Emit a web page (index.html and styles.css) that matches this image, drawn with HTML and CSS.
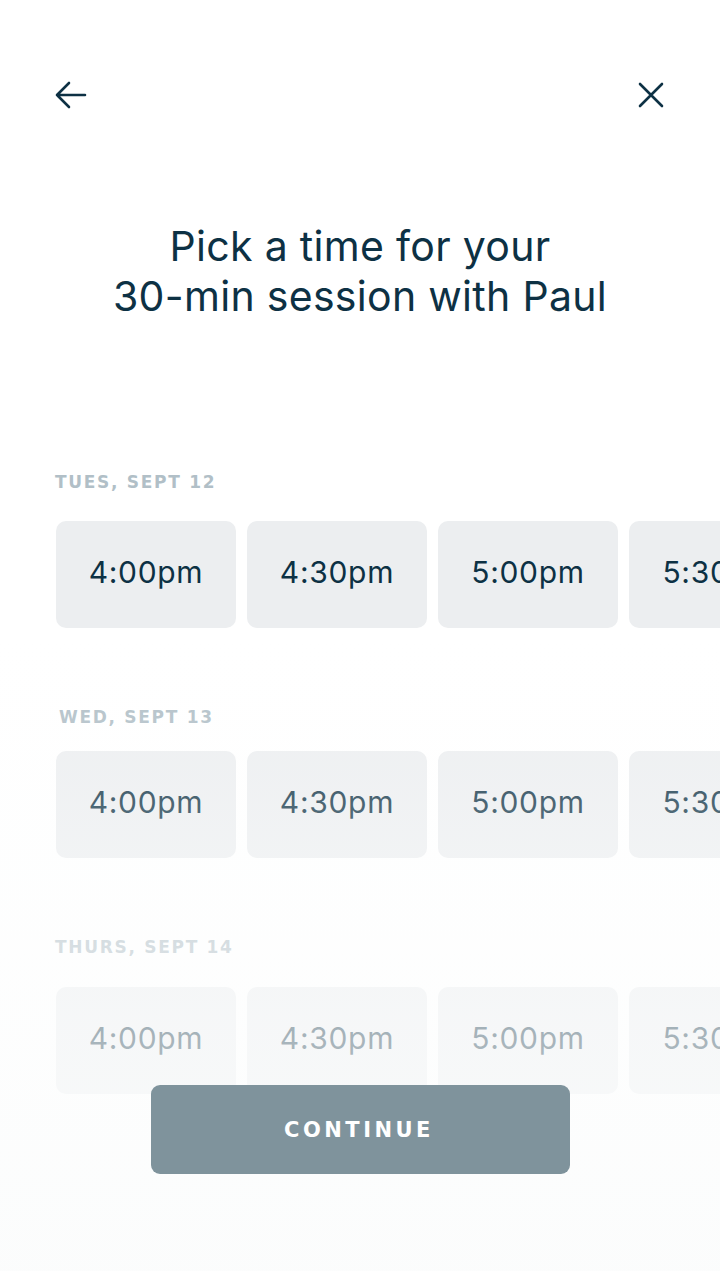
FILE: index.html
```html
<!DOCTYPE html>
<html>
<head>
<meta charset="utf-8">
<link rel="stylesheet" href="styles.css">
</head>
<body>
<div class="screen">
  <header class="topbar">
    <button class="icon-btn" aria-label="Back">
      <svg width="34" height="34" viewBox="0 0 34 34" fill="none" stroke="#0d3144" stroke-width="2.6" stroke-linecap="round" stroke-linejoin="round"><path d="M31 17H3M15 5L3 17l12 12"/></svg>
    </button>
    <button class="icon-btn" aria-label="Close">
      <svg width="28" height="28" viewBox="0 0 28 28" fill="none" stroke="#0d3144" stroke-width="2.6" stroke-linecap="round"><path d="M3 3l22 22M25 3L3 25"/></svg>
    </button>
  </header>

  <h1 class="title">Pick a time for your<br>30-min session with Paul</h1>

  <section class="day day-1">
    <div class="day-label">TUES, SEPT 12</div>
    <div class="slots">
      <div class="slot">4:00pm</div>
      <div class="slot">4:30pm</div>
      <div class="slot">5:00pm</div>
      <div class="slot">5:30pm</div>
    </div>
  </section>

  <section class="day day-2">
    <div class="day-label label-indent">WED, SEPT 13</div>
    <div class="slots">
      <div class="slot">4:00pm</div>
      <div class="slot">4:30pm</div>
      <div class="slot">5:00pm</div>
      <div class="slot">5:30pm</div>
    </div>
  </section>

  <section class="day day-3">
    <div class="day-label">THURS, SEPT 14</div>
    <div class="slots">
      <div class="slot">4:00pm</div>
      <div class="slot">4:30pm</div>
      <div class="slot">5:00pm</div>
      <div class="slot">5:30pm</div>
    </div>
  </section>

  <div class="fade"></div>

  <div class="footer">
    <button class="continue">CONTINUE</button>
  </div>
</div>
</body>
</html>
```

FILE: styles.css
```css
* { box-sizing: border-box; }
html, body { margin: 0; padding: 0; background: #ffffff; }
body {
  font-family: Inter, "Noto Sans", sans-serif;
  color: #0d3144;
}
.screen {
  position: relative;
  width: 720px;
  height: 1271px;
  overflow: hidden;
}
.topbar {
  display: flex;
  justify-content: space-between;
  align-items: center;
  padding: 78px 55px 0 54px;
  height: 112px;
}
.icon-btn {
  background: none;
  border: 0;
  padding: 0;
  display: flex;
}
.title {
  margin: 109px 0 0;
  text-align: center;
  font-weight: 400;
  font-size: 41px;
  line-height: 50px;
  letter-spacing: 0.3px;
  color: #0d3144;
}
.day {
  padding-left: 55px;
}
.day-1 { margin-top: 151px; }
.day-2 { margin-top: 79px; }
.day-3 { margin-top: 79px; }
.day-label {
  font-family: "DejaVu Sans", Verdana, sans-serif;
  font-weight: 700;
  font-size: 17px;
  letter-spacing: 1.7px;
  color: #b1bfc7;
  line-height: 20px;
}
.label-indent { padding-left: 4px; }
.slots {
  display: flex;
  gap: 11px;
  margin-top: 29px;
  overflow: hidden;
  padding-left: 1px;
}
.day-2 .slots { margin-top: 24px; }
.day-3 .slots { margin-top: 30px; }
.slot {
  flex: 0 0 180px;
  height: 107px;
  border-radius: 10px;
  background: #eceef0;
  display: flex;
  align-items: center;
  justify-content: center;
  font-size: 30px;
  letter-spacing: 0.7px;
  color: #0d3144;
  padding-bottom: 5px;
}
.fade {
  position: absolute;
  left: 0;
  right: 0;
  top: 640px;
  bottom: 0;
  background: linear-gradient(to bottom, rgba(255,255,255,0) 0%, rgba(252,253,253,0.25) 25%, rgba(252,253,253,0.62) 60%, rgba(251,252,252,0.9) 100%);
  pointer-events: none;
}
.footer {
  position: absolute;
  left: 0;
  right: 0;
  top: 1085px;
  display: flex;
  justify-content: center;
}
.continue {
  width: 419px;
  height: 89px;
  border: 0;
  border-radius: 9px;
  background: #7f939c;
  color: #ffffff;
  font-family: "DejaVu Sans", Verdana, sans-serif;
  font-weight: 700;
  font-size: 21px;
  letter-spacing: 3.5px;
  padding-left: 4px;
}
```
